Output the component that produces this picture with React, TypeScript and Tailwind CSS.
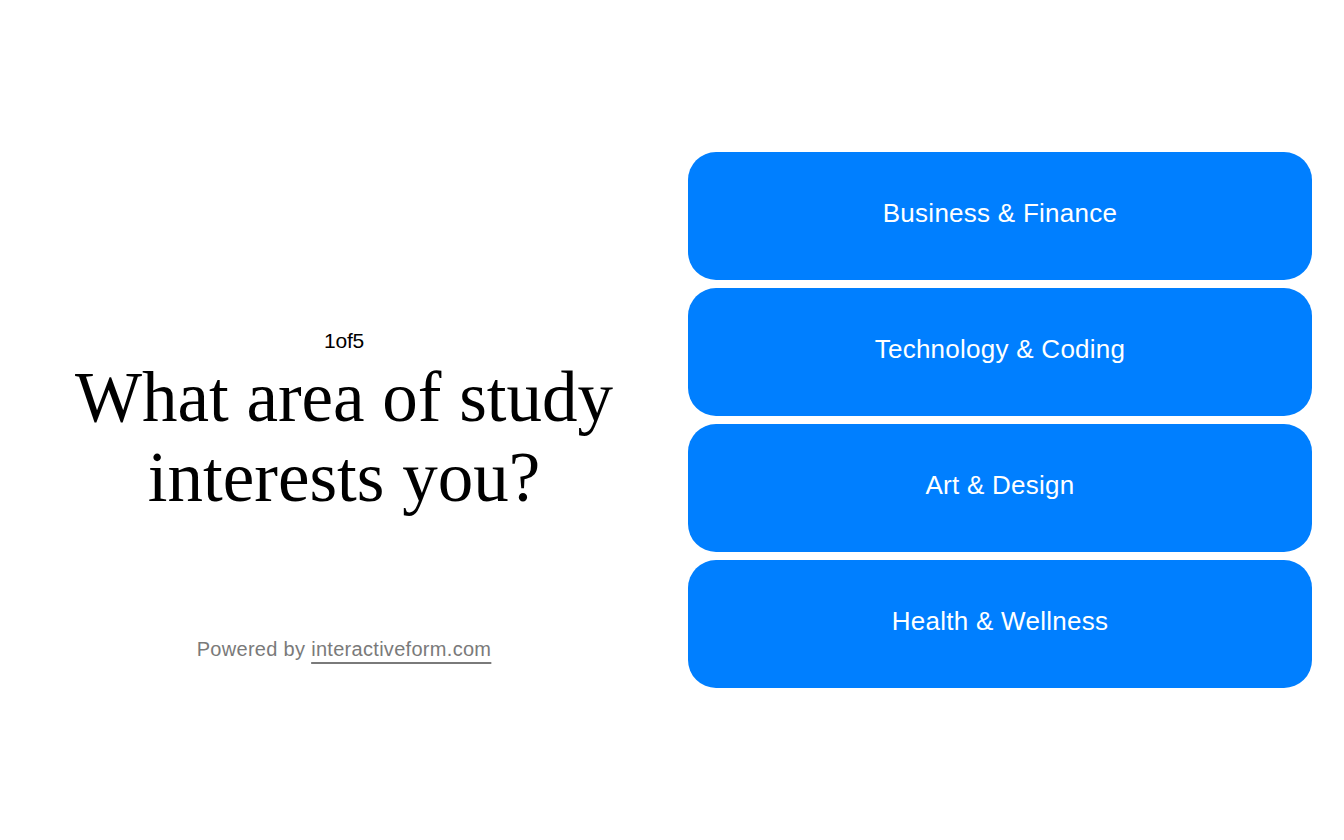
import React from 'react';

const OPTIONS = ['Business & Finance', 'Technology & Coding', 'Art & Design', 'Health & Wellness'];

export default function App() {
  return (
    <div className="w-full h-[840px] bg-white flex items-center px-8" style={{ fontFamily: '"Liberation Sans", Arial, sans-serif' }}>
      <div className="grid grid-cols-2 gap-8 w-full h-[536px]">
        {/* left: question */}
        <div className="flex flex-col items-center">
          <div className="flex-1" />
          <div className="mt-[28px] flex flex-col items-center text-center">
            <span className="text-[21px] text-black tracking-[-0.01em] leading-[28px]">1of5</span>
            <h1
              className="mt-[2px] text-[71px] leading-[80px] text-black"
              style={{ fontFamily: '"Liberation Serif", "Times New Roman", serif' }}
            >
              What area of study
              <br />
              interests you?
            </h1>
          </div>
          <div className="flex-1 flex flex-col justify-end pb-[24px]">
            <p className="text-[20px] text-[#7a7a7a] tracking-[0.015em]">
              Powered by{' '}
              <a href="#" className="underline decoration-2 underline-offset-[6px] decoration-[#7a7a7a]">
                interactiveform.com
              </a>
            </p>
          </div>
        </div>

        {/* right: options */}
        <div className="flex flex-col gap-2">
          {OPTIONS.map((opt) => (
            <button
              key={opt}
              className="h-32 rounded-[28px] bg-[#007fff] text-white text-[26px] tracking-[0.01em] pb-[6px] flex items-center justify-center"
            >
              {opt}
            </button>
          ))}
        </div>
      </div>
    </div>
  );
}
